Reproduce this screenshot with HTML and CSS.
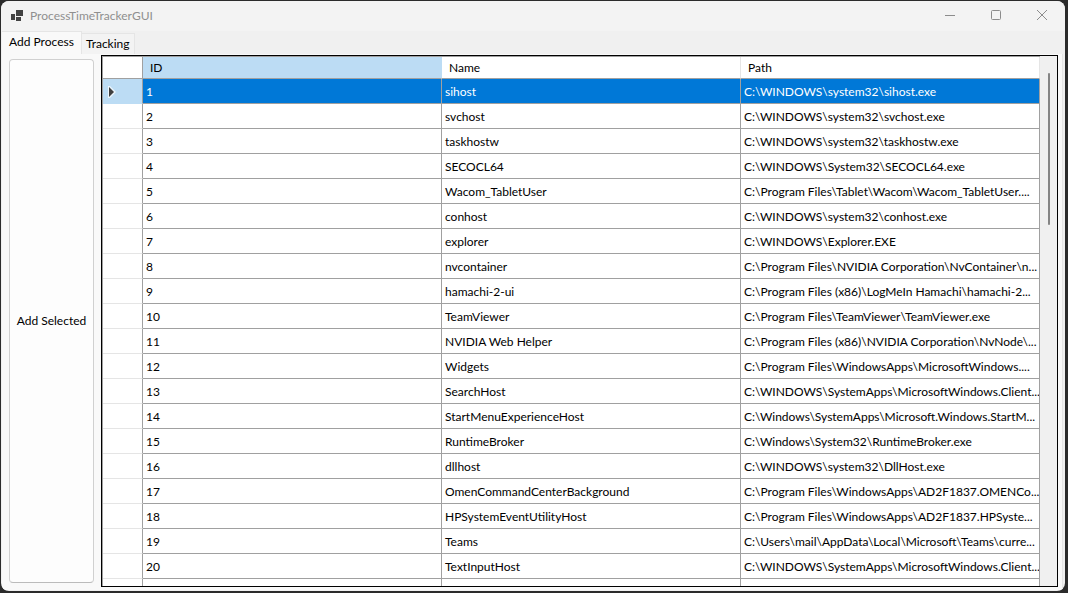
FILE: index.html
```html
<!DOCTYPE html>
<html lang="en">
<head>
<meta charset="utf-8">
<title>ProcessTimeTrackerGUI</title>
<link rel="stylesheet" href="styles.css">
</head>
<body>
<div class="window">
  <header class="titlebar">
    <svg class="app-icon" width="12" height="12" viewBox="0 0 12 12" shape-rendering="crispEdges" aria-hidden="true"><path fill="#424242" d="M5 0h7v6H5zM0 4h4v6H0zM5 7h5v4H5z"/></svg>
    <h1 class="title">ProcessTimeTrackerGUI</h1>
    <div class="controls">
      <button class="control" type="button" aria-label="Minimize"><svg width="12" height="12" viewBox="0 0 12 12"><path d="M1 5.5h10"/></svg></button>
      <button class="control" type="button" aria-label="Maximize"><svg width="12" height="12" viewBox="0 0 12 12"><rect x="1.500" y=".5" width="9" height="9" rx="1"/></svg></button>
      <button class="control" type="button" aria-label="Close"><svg width="12" height="12" viewBox="0 0 12 12"><path d="M1 0l10 10M11 0L1 10"/></svg></button>
    </div>
  </header>
  <nav class="tabs" role="tablist">
    <button class="tab tab-active" type="button" role="tab" aria-selected="true">Add Process</button>
    <button class="tab" type="button" role="tab" aria-selected="false">Tracking</button>
  </nav>
  <main class="page">
    <button class="add-button" type="button">Add Selected</button>
    <div class="grid">
      <div class="rows">
        <table class="table">
          <colgroup><col class="col-marker"><col><col><col></colgroup>
          <thead><tr><th class="marker"></th><th class="sorted">ID</th><th>Name</th><th>Path</th></tr></thead>
          <tbody>
            <tr class="selected"><td class="marker"><svg class="arrow" width="8" height="12" viewBox="0 0 8 12" aria-hidden="true"><path fill="#fff" fill-opacity=".7" d="M0 0v12h2l6-6-6-6z"/><path fill="#404040" d="M1 1v10l5-5z"/></svg></td><td>1</td><td>sihost</td><td>C:\WINDOWS\system32\sihost.exe</td></tr>
            <tr><td class="marker"></td><td>2</td><td>svchost</td><td>C:\WINDOWS\system32\svchost.exe</td></tr>
            <tr><td class="marker"></td><td>3</td><td>taskhostw</td><td>C:\WINDOWS\system32\taskhostw.exe</td></tr>
            <tr><td class="marker"></td><td>4</td><td>SECOCL64</td><td>C:\WINDOWS\System32\SECOCL64.exe</td></tr>
            <tr><td class="marker"></td><td>5</td><td>Wacom_TabletUser</td><td>C:\Program Files\Tablet\Wacom\Wacom_TabletUser....</td></tr>
            <tr><td class="marker"></td><td>6</td><td>conhost</td><td>C:\WINDOWS\system32\conhost.exe</td></tr>
            <tr><td class="marker"></td><td>7</td><td>explorer</td><td>C:\WINDOWS\Explorer.EXE</td></tr>
            <tr><td class="marker"></td><td>8</td><td>nvcontainer</td><td>C:\Program Files\NVIDIA Corporation\NvContainer\n...</td></tr>
            <tr><td class="marker"></td><td>9</td><td>hamachi-2-ui</td><td>C:\Program Files (x86)\LogMeIn Hamachi\hamachi-2...</td></tr>
            <tr><td class="marker"></td><td>10</td><td>TeamViewer</td><td>C:\Program Files\TeamViewer\TeamViewer.exe</td></tr>
            <tr><td class="marker"></td><td>11</td><td>NVIDIA Web Helper</td><td>C:\Program Files (x86)\NVIDIA Corporation\NvNode\...</td></tr>
            <tr><td class="marker"></td><td>12</td><td>Widgets</td><td>C:\Program Files\WindowsApps\MicrosoftWindows....</td></tr>
            <tr><td class="marker"></td><td>13</td><td>SearchHost</td><td>C:\WINDOWS\SystemApps\MicrosoftWindows.Client...</td></tr>
            <tr><td class="marker"></td><td>14</td><td>StartMenuExperienceHost</td><td>C:\Windows\SystemApps\Microsoft.Windows.StartM...</td></tr>
            <tr><td class="marker"></td><td>15</td><td>RuntimeBroker</td><td>C:\Windows\System32\RuntimeBroker.exe</td></tr>
            <tr><td class="marker"></td><td>16</td><td>dllhost</td><td>C:\WINDOWS\system32\DllHost.exe</td></tr>
            <tr><td class="marker"></td><td>17</td><td>OmenCommandCenterBackground</td><td>C:\Program Files\WindowsApps\AD2F1837.OMENCo...</td></tr>
            <tr><td class="marker"></td><td>18</td><td>HPSystemEventUtilityHost</td><td>C:\Program Files\WindowsApps\AD2F1837.HPSyste...</td></tr>
            <tr><td class="marker"></td><td>19</td><td>Teams</td><td>C:\Users\mail\AppData\Local\Microsoft\Teams\curre...</td></tr>
            <tr><td class="marker"></td><td>20</td><td>TextInputHost</td><td>C:\WINDOWS\SystemApps\MicrosoftWindows.Client...</td></tr>
            <tr><td class="marker"></td><td></td><td></td><td></td></tr>
          </tbody>
        </table>
      </div>
      <div class="scrollbar"><div class="thumb"></div></div>
    </div>
  </main>
</div>
</body>
</html>
```
FILE: styles.css
```css
* { box-sizing: border-box; }

body {
  margin: 0;
  height: 100vh;
  padding: 1px 3px 2px 1px;
  background: #2b2b2b;
  color: #000;
  font-family: Lato, "Open Sans", sans-serif;
  font-size: 12px;
  line-height: 16px;
  overflow: hidden;
}

button {
  margin: 0;
  padding: 0;
  border: 0;
  background: none;
  color: inherit;
  font: inherit;
}

.window {
  display: flex;
  flex-direction: column;
  height: 100%;
  border-radius: 8px;
  background: #f0f0f0;
  overflow: hidden;
}

.titlebar {
  display: flex;
  flex: none;
  align-items: center;
  height: 30px;
  padding-left: 10px;
  background: #f3f3f3;
}

.app-icon { flex: none; }

.title {
  flex: 1;
  margin: 0 0 0 7px;
  color: #8f8f8f;
  font-size: 12px;
  font-weight: 400;
}

.controls { display: flex; }

.control {
  display: flex;
  align-items: center;
  justify-content: center;
  width: 46px;
  height: 30px;
}

.control svg {
  fill: none;
  stroke: #8c8c8c;
}

.tabs {
  display: flex;
  flex: none;
  align-items: flex-end;
  height: 23px;
  padding-left: 1px;
}

.tab {
  height: 21px;
  padding: 0 4px;
  border: 1px solid #e5e5e5;
  border-left: 0;
  border-bottom: 0;
  background: #f3f3f3;
  white-space: nowrap;
}

.tab-active {
  height: 23px;
  padding: 0 7px 3px;
  background: #f9f9f9;
}

.page {
  display: flex;
  flex: 1;
  gap: 7px;
  min-height: 0;
  margin: 0 2px 1px 1px;
  padding: 1px 4px 3px 7px;
  border-right: 1px solid #e5e5e5;
  background: #f9f9f9;
}

.add-button {
  flex: none;
  width: 85px;
  margin: 4px 0;
  border: 1px solid #d0d0d0;
  border-bottom-color: #bbb;
  border-radius: 4px;
  background: #fdfdfd;
}

.grid {
  display: flex;
  flex: 1;
  min-width: 0;
  border: 1px solid #000;
  background: #f0f0f0;
}

.rows {
  flex: 1;
  min-width: 0;
  overflow: hidden;
}

.table {
  width: 100%;
  border: solid #a0a0a0;
  border-width: 1px 0 0 1px;
  border-spacing: 0;
  table-layout: fixed;
  background: #fff;
}

.col-marker { width: 40px; }

.table th,
.table td {
  height: 25px;
  padding: 2px 0 0 3px;
  border: solid #a0a0a0;
  border-width: 0 1px 1px 0;
  overflow: hidden;
  text-align: left;
  white-space: nowrap;
}

.table th {
  height: 22px;
  padding: 0 0 0 7px;
  border-right-color: #e5e5e5;
  font-weight: 400;
}

.table .sorted {
  border-right-color: #bcdcf4;
  background: #bcdcf4;
}

.table .marker { border-right-color: #a0a0a0; }
.table td.marker { border-bottom-color: #e5e5e5; }

.selected td {
  background: #0078d7;
  color: #fff;
}

.table .selected .marker {
  border-bottom-color: #bcdcf4;
  background: #bcdcf4;
}

.arrow {
  display: block;
  margin-left: 2px;
}

.scrollbar {
  flex: none;
  width: 17px;
  padding: 17px 0 0 8px;
}

.thumb {
  width: 2px;
  height: 152px;
  border-radius: 1px;
  background: #858585;
}
```
